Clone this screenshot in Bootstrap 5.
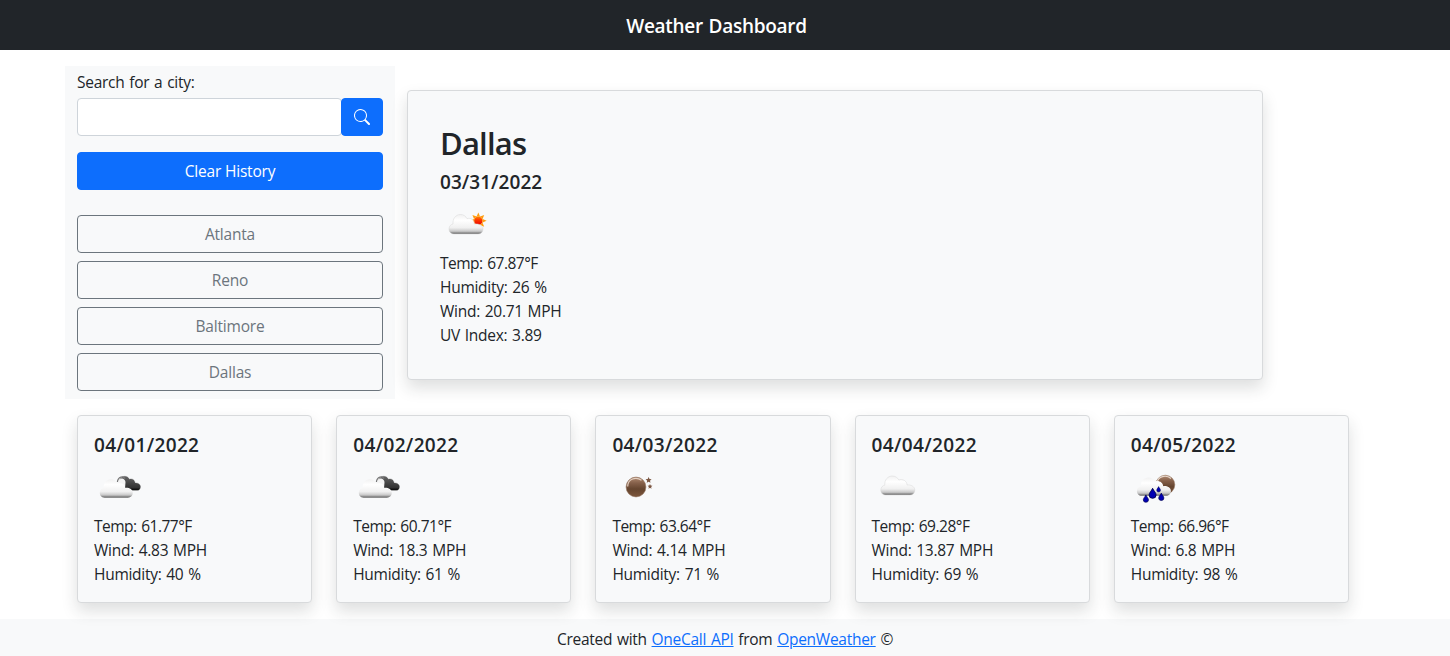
<!DOCTYPE html>
<html lang="en">
<head>
<meta charset="utf-8">
<meta name="viewport" content="width=device-width, initial-scale=1">
<title>Weather Dashboard</title>
<link href="https://cdn.jsdelivr.net/npm/bootstrap@5.3.0/dist/css/bootstrap.min.css" rel="stylesheet">
<style>
  body { font-family: "Open Sans", "Noto Sans", sans-serif; font-size: 15.5px; line-height: 24px; font-weight: 400; letter-spacing: -.27px; word-spacing: 1px; color: #212529; }
  h1, h2, h3 { font-weight: 600; }
  .topbar { height: 50px; padding-right: 17px; }
  .topbar h1, .date { font-size: 19px; line-height: 24px; letter-spacing: -.28px; }
  .topbar h1 { padding-top: 2px; }
  .date { letter-spacing: .05px; padding-top: 1px; margin-bottom: 7px; }
  .forecast .date { letter-spacing: .36px; }
  .city { font-size: 31px; line-height: 38.4px; letter-spacing: -.8px; padding-top: 1px; margin-bottom: 7px; }
  .search-panel { padding: 4px 12px 8px; }
  .search-panel .btn, .search-panel .form-control, .card { border-radius: 4px; }
  .search-panel .form-control { height: 38px; border-color: #ced4da; }
  .btn { height: 38px; font-size: 15.5px; line-height: 25px; font-weight: 400; letter-spacing: -.2px; }
  .search-btn { width: 42px; margin-left: -1px; }
  .history { margin-top: 25px; }
  .card { border-color: #d8dadc; }
  .wx { display: block; width: 50px; height: 50px; }
  .temp { letter-spacing: -.5px; }
  .forecast { width: 1320px; padding-right: 24px; }
  .page-foot { height: 37px; padding-top: 8px; }
  .page-foot a { color: #0d6efd; }
</style>
</head>
<body>
<svg width="0" height="0" class="position-absolute" aria-hidden="true">
  <defs>
    <linearGradient id="white" x1="0" y1="0" x2="0" y2="1"><stop offset="0" stop-color="#f1f1f1"/><stop offset=".3" stop-color="#fff"/><stop offset=".68" stop-color="#f0f0f0"/><stop offset=".86" stop-color="#c8c8c8"/><stop offset=".94" stop-color="#8c8c8c"/><stop offset="1" stop-color="#666"/></linearGradient>
    <linearGradient id="dark" x1="0" y1="0" x2="0" y2="1"><stop offset="0" stop-color="#666"/><stop offset=".5" stop-color="#444"/><stop offset=".8" stop-color="#333"/><stop offset="1" stop-color="#000"/></linearGradient>
    <linearGradient id="sunfill" x1="0" y1="0" x2="0" y2="1"><stop offset="0" stop-color="#ff8a00"/><stop offset=".4" stop-color="#ff3a00"/><stop offset="1" stop-color="#e60000"/></linearGradient>
    <linearGradient id="brown" x1="0" y1="0" x2="0" y2="1"><stop offset="0" stop-color="#b08a70"/><stop offset=".3" stop-color="#85604a"/><stop offset=".6" stop-color="#65452f"/><stop offset="1" stop-color="#7c563c"/></linearGradient>
    <path id="puff" d="M5 19C1.500 19 0 16.600 0 14C0 11.200 2 9.500 4 9.200C3.500 4 7 0 11.500 0C14.500 0 17 1.800 18 4C22 2.500 26 5 26.300 9C30 8.500 34 10.500 34 14C34 17 32 19 29 19Z"/>
    <path id="drop" d="M0-5C1-2.500 3.500-.5 3.500 1.700A3.500 3.300 0 0 1-3.500 1.700C-3.500-.5-1-2.500 0-5Z" fill="#0000b4" stroke="#000050" stroke-width=".9"/>
    <path id="star" d="M0-3L.9-1L3-.8L1.400.7L1.900 2.800L0 1.700L-1.900 2.800L-1.400.7L-3-.8L-.9-1Z" fill="#7a5540"/>
    <symbol id="few" viewBox="0 0 50 50">
      <g fill="#ff9c0a" transform="translate(38.300 19.800)">
        <path id="ray" d="M-1.700-4.300L0-8.300L1.700-4.300Z"/>
        <use href="#ray" transform="rotate(45)"/><use href="#ray" transform="rotate(90)"/><use href="#ray" transform="rotate(135)"/><use href="#ray" transform="rotate(180)"/><use href="#ray" transform="rotate(270)"/><use href="#ray" transform="rotate(315)"/>
      </g>
      <circle cx="38.300" cy="19.800" r="4.500" fill="url(#sunfill)" stroke="#ffb347" stroke-width=".9"/>
      <path d="M14 33C10.500 33 9 30.600 9 28C9 25 11 23.300 13 23C12.500 17.500 16 13.500 20.500 13.500C23.500 13.500 26 15.300 27 17.700C31 16.200 34 19 34.300 23C39 22.500 43 24.500 43 28C43 31 41 33 38 33Z" fill="url(#white)" stroke="#d6d6d6" stroke-width=".5"/>
    </symbol>
    <symbol id="broken" viewBox="0 0 50 50">
      <use href="#puff" transform="translate(22.700 12.300) scale(.7 .74)" fill="url(#dark)" stroke="#555" stroke-width=".4"/>
      <path d="M23.800 22C23.500 13 30.500 12.500 31.500 18L31 25" fill="#f5f5f5"/>
      <path d="M23.400 18C24 12.500 29.500 11.500 31 14.800" fill="none" stroke="#777" stroke-width="1.200"/>
      <use href="#puff" transform="translate(5.800 15.200) scale(.97)" fill="url(#white)"/>
    </symbol>
    <symbol id="night" viewBox="0 0 50 50">
      <circle cx="24" cy="23" r="9.900" fill="url(#brown)" stroke="#8d6c55" stroke-width=".6"/>
      <path d="M15.700 22.500C15.800 14.500 24 12.500 29.500 16.200" fill="none" stroke="#e3cfc0" stroke-width="1.200"/>
      <use href="#star" x="36.600" y="16"/><use href="#star" transform="translate(38 22.400) scale(.8)"/>
    </symbol>
    <symbol id="scattered" viewBox="0 0 50 50">
      <use href="#puff" transform="translate(8.800 12)" fill="url(#white)" stroke="#d6d6d6" stroke-width=".5"/>
    </symbol>
    <symbol id="rain" viewBox="0 0 50 50">
      <circle cx="34.300" cy="20.700" r="9.500" fill="url(#brown)" stroke="#8d6c55" stroke-width=".5"/>
      <path d="M26 19C27 12 35 10.500 40 14.500" fill="none" stroke="#e6d6ca" stroke-width="1.200"/>
      <use href="#puff" transform="translate(5.900 13.500) scale(1 .96)" fill="url(#white)"/>
      <use href="#drop" x="21.600" y="29.300"/>
      <use href="#drop" transform="translate(14.900 34.600) scale(.74)"/>
      <use href="#drop" transform="translate(30.300 32.800) scale(.74)"/>
      <use href="#drop" transform="translate(27.600 25.300) scale(.54)"/>
    </symbol>
  </defs>
</svg>

<header class="topbar bg-dark text-white d-flex align-items-center justify-content-center">
  <h1 class="mb-0">Weather Dashboard</h1>
</header>

<main class="container">
  <div class="row mt-3">
    <aside class="col-3 bg-light search-panel">
      <label for="city" class="d-block mb-1">Search for a city:</label>
      <form class="d-flex mb-3">
        <input id="city" type="text" class="form-control" autocomplete="off">
        <button type="button" class="btn btn-primary search-btn flex-shrink-0 p-0 d-flex align-items-center justify-content-center" aria-label="Search">
          <svg width="16" height="16" fill="currentColor" viewBox="0 0 16 16"><path d="M11.742 10.344a6.500 6.500 0 1 0-1.397 1.398h-.001c.03.04.062.078.098.115l3.850 3.850a1 1 0 0 0 1.415-1.414l-3.850-3.850a1.007 1.007 0 0 0-.115-.1zM12 6.500a5.500 5.500 0 1 1-11 0 5.500 5.500 0 0 1 11 0z"/></svg>
        </button>
      </form>
      <button type="button" class="btn btn-primary w-100">Clear History</button>
      <div class="history d-grid gap-2">
        <button type="button" class="btn btn-outline-secondary">Atlanta</button>
        <button type="button" class="btn btn-outline-secondary">Reno</button>
        <button type="button" class="btn btn-outline-secondary">Baltimore</button>
        <button type="button" class="btn btn-outline-secondary">Dallas</button>
      </div>
    </aside>
    <section class="col-8">
      <div class="card bg-light shadow mt-4">
        <div class="card-body" style="padding:32px">
          <h2 class="city">Dallas</h2>
          <h3 class="date">03/31/2022</h3>
          <svg class="wx"><use href="#few"/></svg>
          <div class="temp">Temp: 67.87°F</div>
          <div>Humidity: 26 %</div>
          <div>Wind: 20.71 MPH</div>
          <div>UV Index: 3.89</div>
        </div>
      </div>
    </section>
  </div>

  <div class="row row-cols-5 my-3 forecast">
    <div class="col"><div class="card bg-light shadow"><div class="card-body p-3">
      <h3 class="date">04/01/2022</h3><svg class="wx"><use href="#broken"/></svg>
      <div class="temp">Temp: 61.77°F</div><div>Wind: 4.83 MPH</div><div>Humidity: 40 %</div>
    </div></div></div>
    <div class="col"><div class="card bg-light shadow"><div class="card-body p-3">
      <h3 class="date">04/02/2022</h3><svg class="wx"><use href="#broken"/></svg>
      <div class="temp">Temp: 60.71°F</div><div>Wind: 18.3 MPH</div><div>Humidity: 61 %</div>
    </div></div></div>
    <div class="col"><div class="card bg-light shadow"><div class="card-body p-3">
      <h3 class="date">04/03/2022</h3><svg class="wx"><use href="#night"/></svg>
      <div class="temp">Temp: 63.64°F</div><div>Wind: 4.14 MPH</div><div>Humidity: 71 %</div>
    </div></div></div>
    <div class="col"><div class="card bg-light shadow"><div class="card-body p-3">
      <h3 class="date">04/04/2022</h3><svg class="wx"><use href="#scattered"/></svg>
      <div class="temp">Temp: 69.28°F</div><div>Wind: 13.87 MPH</div><div>Humidity: 69 %</div>
    </div></div></div>
    <div class="col"><div class="card bg-light shadow"><div class="card-body p-3">
      <h3 class="date">04/05/2022</h3><svg class="wx"><use href="#rain"/></svg>
      <div class="temp">Temp: 66.96°F</div><div>Wind: 6.8 MPH</div><div>Humidity: 98 %</div>
    </div></div></div>
  </div>
</main>

<footer class="page-foot bg-light text-center">
  Created with <a href="#">OneCall API</a> from <a href="#">OpenWeather</a> ©
</footer>
<script src="https://cdn.jsdelivr.net/npm/bootstrap@5.3.0/dist/js/bootstrap.bundle.min.js"></script>
</body>
</html>
